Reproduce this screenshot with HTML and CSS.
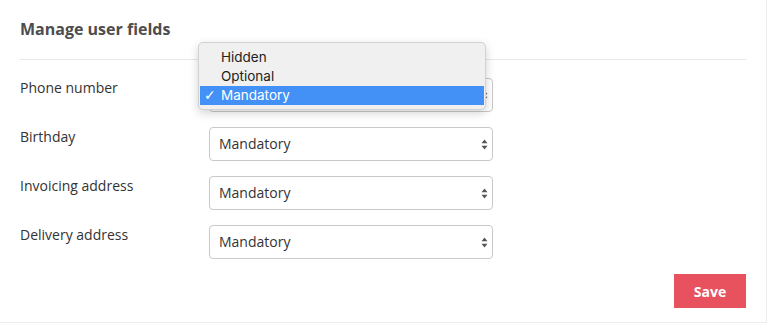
FILE: index.html
```html
<!DOCTYPE html>
<html>
<head>
<meta charset="utf-8">
<link rel="stylesheet" href="styles.css">
</head>
<body>
<div class="card">
  <div class="card-header">
    <h2 class="title">Manage user fields</h2>
  </div>
  <form class="fields">
    <div class="row">
      <label class="label">Phone number</label>
      <div class="select-wrap">
        <select class="select"><option>Hidden</option><option>Optional</option><option selected>Mandatory</option></select>
        <svg class="arrows" width="7" height="11" viewBox="0 0 7 11"><path d="M3.5 0.5 L6.5 4.2 L0.5 4.2 Z M3.5 10.5 L6.5 6.8 L0.5 6.8 Z" fill="#555"/></svg>
        <ul class="menu">
          <li class="menu-item">Hidden</li>
          <li class="menu-item">Optional</li>
          <li class="menu-item active"><span class="check">✓</span>Mandatory</li>
        </ul>
      </div>
    </div>
    <div class="row">
      <label class="label">Birthday</label>
      <div class="select-wrap">
        <select class="select"><option>Hidden</option><option>Optional</option><option selected>Mandatory</option></select>
        <svg class="arrows" width="7" height="11" viewBox="0 0 7 11"><path d="M3.5 0.5 L6.5 4.2 L0.5 4.2 Z M3.5 10.5 L6.5 6.8 L0.5 6.8 Z" fill="#555"/></svg>
      </div>
    </div>
    <div class="row">
      <label class="label">Invoicing address</label>
      <div class="select-wrap">
        <select class="select"><option>Hidden</option><option>Optional</option><option selected>Mandatory</option></select>
        <svg class="arrows" width="7" height="11" viewBox="0 0 7 11"><path d="M3.5 0.5 L6.5 4.2 L0.5 4.2 Z M3.5 10.5 L6.5 6.8 L0.5 6.8 Z" fill="#555"/></svg>
      </div>
    </div>
    <div class="row">
      <label class="label">Delivery address</label>
      <div class="select-wrap">
        <select class="select"><option>Hidden</option><option>Optional</option><option selected>Mandatory</option></select>
        <svg class="arrows" width="7" height="11" viewBox="0 0 7 11"><path d="M3.5 0.5 L6.5 4.2 L0.5 4.2 Z M3.5 10.5 L6.5 6.8 L0.5 6.8 Z" fill="#555"/></svg>
      </div>
    </div>
    <div class="actions">
      <button type="button" class="btn-save">Save</button>
    </div>
  </form>
</div>
</body>
</html>
```
FILE: styles.css
```css
* { box-sizing: border-box; }
html, body { margin: 0; padding: 0; background: #fff; }
body { font-family: "Open Sans", sans-serif; color: #333; }
.card {
  width: 767px;
  height: 323px;
  padding: 0 20px;
  border-right: 1px solid #ececec;
  border-bottom: 1px solid #ececec;
  background: #fff;
}
.card-header {
  height: 60px;
  border-bottom: 1px solid #e8e8e8;
  display: flex;
  align-items: center;
}
.title {
  margin: 0;
  font-size: 16px;
  font-weight: 700;
  color: #4d4d4d;
  line-height: 22px;
  padding-bottom: 2px;
}
.fields {
  margin: 0;
  padding-top: 18px;
  display: flex;
  flex-direction: column;
  gap: 15px;
}
.row {
  display: flex;
  align-items: flex-start;
}
.label {
  width: 189px;
  font-size: 14px;
  line-height: 20px;
  color: #333;
}
.select-wrap {
  position: relative;
  width: 284px;
  height: 34px;
}
.select {
  appearance: none;
  -webkit-appearance: none;
  width: 100%;
  height: 34px;
  border: 1px solid #c9c9c9;
  border-radius: 4px;
  background: #fff;
  font-family: "Open Sans", sans-serif;
  font-size: 14px;
  color: #333;
  padding: 0 24px 2px 9px;
  outline: none;
}
.arrows {
  position: absolute;
  right: 5px;
  top: 12px;
  pointer-events: none;
}
.menu {
  position: absolute;
  left: -11px;
  top: -36px;
  width: 288px;
  margin: 0;
  padding: 5px 1px 4px;
  list-style: none;
  background: #f0f0f0;
  border: 1px solid #d2d2d2;
  border-radius: 5px;
  box-shadow: 0 3px 10px rgba(0,0,0,0.18);
  font-family: "Inter", "Liberation Sans", sans-serif;
  font-size: 13.5px;
  color: #222;
}
.menu-item {
  height: 19px;
  line-height: 19px;
  padding-left: 21px;
  position: relative;
}
.menu-item.active {
  background: #4391f7;
  color: #fff;
}
.check {
  position: absolute;
  left: 4px;
  top: 0;
  font-family: "DejaVu Sans", sans-serif;
  font-size: 14px;
}
.actions {
  display: flex;
  justify-content: flex-end;
  padding-top: 0;
}
.btn-save {
  width: 72px;
  height: 34px;
  border: 0;
  border-radius: 0;
  background: #e8525f;
  color: #fff;
  font-family: "Open Sans", sans-serif;
  font-weight: 700;
  font-size: 14px;
  cursor: pointer;
}
```
